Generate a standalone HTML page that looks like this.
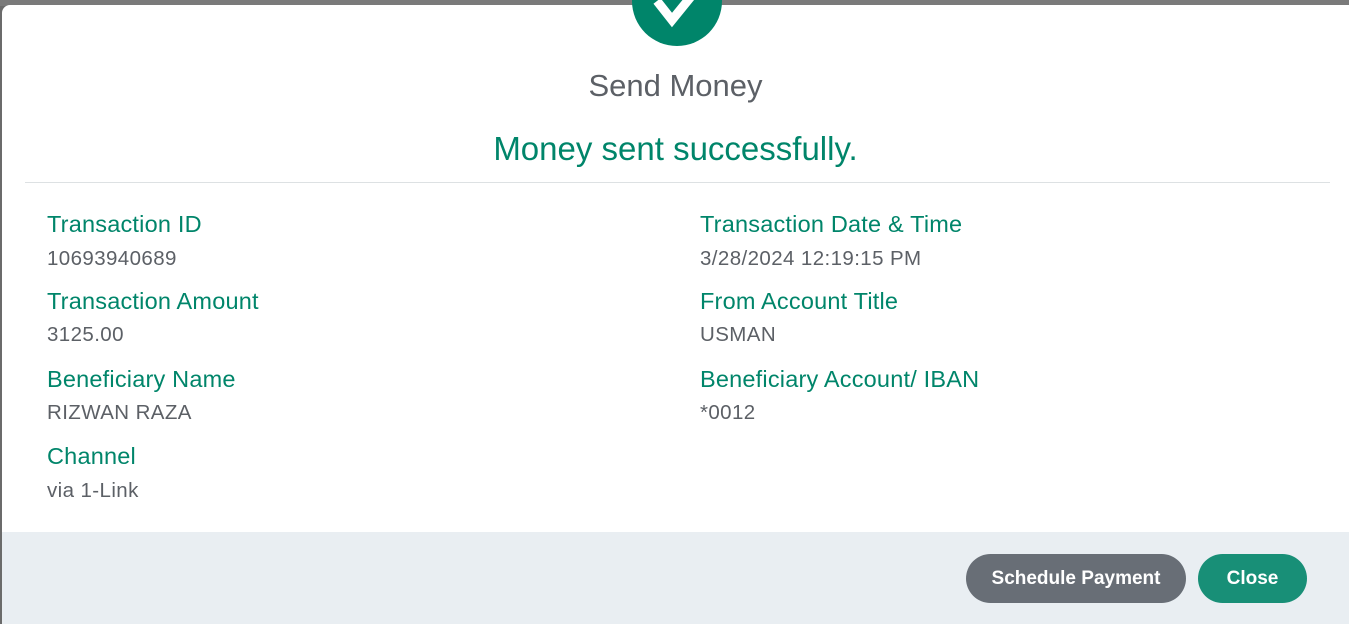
<!DOCTYPE html>
<html><head><style>
body{margin:0;width:1349px;height:624px;overflow:hidden;background:#6b6b6b;font-family:"Liberation Sans",sans-serif;position:relative}
.bgbar{position:absolute;top:0;left:0;width:1349px;height:6px;background:#7a7a7a}
.modal{position:absolute;left:2px;top:5px;width:1347px;height:619px;background:#fff;border-radius:8px 0 0 0;overflow:hidden}
.circle{position:absolute;left:632px;top:-44px;width:90px;height:90px;border-radius:50%;background:#00856a}
.h1{position:absolute;top:63px;width:100%;text-align:center;font-size:31px;color:#5c6066}
.h2{position:absolute;top:125px;width:100%;text-align:center;font-size:33px;color:#00856a}
.hr{position:absolute;left:23px;top:177px;width:1305px;height:1px;background:#dde1e3}
.l{position:absolute;font-size:23.5px;color:#00856a;letter-spacing:0.2px}
.v{position:absolute;font-size:20.5px;color:#5c6066;letter-spacing:0.4px}
.foot{position:absolute;left:0;top:527px;width:100%;height:92px;background:#e9eef2}
.btn{position:absolute;top:22px;height:49px;border-radius:25px;color:#fff;font-size:19px;font-weight:bold;text-align:center;line-height:50px}
</style></head><body>
<div class="bgbar"></div>
<div class="modal">
<div class="h1">Send Money</div>
<div class="h2">Money sent successfully.</div>
<div class="hr"></div>
<div class="l" style="left:45px;top:206px">Transaction ID</div>
<div class="v" style="left:45px;top:242px">10693940689</div>
<div class="l" style="left:45px;top:283px">Transaction Amount</div>
<div class="v" style="left:45px;top:318px">3125.00</div>
<div class="l" style="left:45px;top:361px">Beneficiary Name</div>
<div class="v" style="left:45px;top:396px">RIZWAN RAZA</div>
<div class="l" style="left:45px;top:438px">Channel</div>
<div class="v" style="left:45px;top:474px">via 1-Link</div>
<div class="l" style="left:698px;top:206px">Transaction Date &amp; Time</div>
<div class="v" style="left:698px;top:242px">3/28/2024 12:19:15 PM</div>
<div class="l" style="left:698px;top:283px">From Account Title</div>
<div class="v" style="left:698px;top:318px">USMAN</div>
<div class="l" style="left:698px;top:361px">Beneficiary Account/ IBAN</div>
<div class="v" style="left:698px;top:396px">*0012</div>
<div class="foot">
<div class="btn" style="left:964px;width:220px;background:#686e76">Schedule Payment</div>
<div class="btn" style="left:1196px;width:109px;background:#188f77">Close</div>
</div>
</div>
<div class="circle"><svg width="90" height="90" viewBox="0 0 90 90"><path d="M25 45 L40 64 L66 32" stroke="#fff" stroke-width="9" fill="none"/></svg></div>
</body></html>
